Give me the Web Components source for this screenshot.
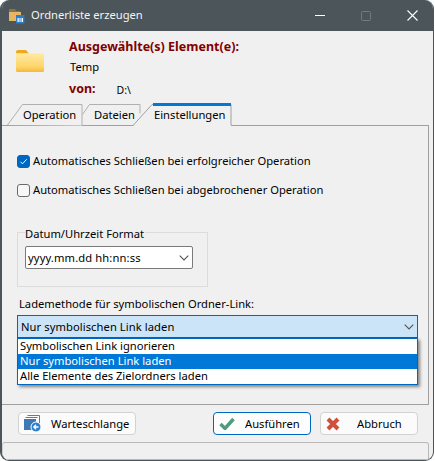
<!DOCTYPE html>
<html lang="de"><head><meta charset="utf-8"><title>Ordnerliste erzeugen</title>
<style>
html,body{margin:0;padding:0;background:#fff}
body{font:11.2px/16px "Noto Sans",sans-serif;color:#000;width:435px;height:461px;overflow:hidden}
</style></head><body>
<dlg-window heading="Ordnerliste erzeugen">
  <info-header></info-header>
  <tab-strip></tab-strip>
  <tab-panel>
    <check-row checked>Automatisches Schließen bei erfolgreicher Operation</check-row>
    <check-row>Automatisches Schließen bei abgebrochener Operation</check-row>
    <group-box label="Datum/Uhrzeit Format"><combo-box value="yyyy.mm.dd hh:nn:ss"></combo-box></group-box>
    <load-method></load-method>
  </tab-panel>
  <action-bar></action-bar>
  <status-bar></status-bar>
</dlg-window>
<script>
const def=(name,css,html,init)=>customElements.define(name,class extends HTMLElement{
  connectedCallback(){ if(this.shadowRoot)return; const r=this.attachShadow({mode:'open'});
    r.innerHTML='<style>'+css+'</style>'+(typeof html==='function'?html(this):html); if(init)init(r,this);}
});
const chevron='<svg width="10" height="6" viewBox="0 0 10 6" fill="none" stroke="#555" stroke-width="1.1"><path d="M.7.7 5 5 9.3.7"/></svg>';

def('dlg-window',`
:host{display:flex;flex-direction:column;box-sizing:border-box;width:434px;height:461px;background:#f0f0f0;border:solid #4c5559;border-width:0 1px 1px 2px;border-radius:9px;overflow:hidden}
.bar{flex:none;display:flex;align-items:center;height:31px;margin-left:-2px;margin-right:-1px;background:#4c5559;color:#f2f4f4;padding-left:9px}
.t{margin-left:6px;flex:1;position:relative;top:-1px}
.b{width:46px;height:31px;display:flex;align-items:center;justify-content:center}
svg{display:block}
`,h=>`<div class="bar">
<svg width="16" height="16" viewBox="0 0 16 16"><path d="M0 1h6l1.500 2H11v2H0z" fill="#8a7345"/><path d="M0 4h12v9H0z" fill="#e8b565"/><path d="M7 7h8.500v8.500H7z" fill="#2b7fc4"/><path d="M8.500 10h5.500v4h-5.500z" fill="#fff"/><path d="M9.500 11h3.500M9.500 13h3.500" stroke="#2b7fc4"/></svg>
<span class="t">${h.getAttribute('heading')}</span>
<div class="b"><svg width="10" height="2" viewBox="0 0 10 2"><path d="M0 .5h10" stroke="#fff"/></svg></div>
<div class="b"><svg width="10" height="10" viewBox="0 0 10 10"><rect x=".5" y=".5" width="9" height="9" rx="1" fill="none" stroke="#727b7e"/></svg></div>
<div class="b" style="margin-right:-1px"><svg width="11" height="11" viewBox="0 0 11 11"><path d="M.5.5l10 10M10.500.5l-10 10" stroke="#fff" stroke-width="1.100"/></svg></div>
</div><slot></slot>`);

def('info-header',`
:host{flex:none;display:flex;height:72px;box-sizing:border-box}
.ic{margin:19px 0 0 14px;width:28px;height:22px}
.c{margin-left:25px;padding-top:8px;display:flex;flex-direction:column}
b{color:#800000;font-weight:700;font-size:12.5px;line-height:16px}
.v{display:flex;height:20px;align-items:center}
.d{margin-left:21px;font-size:10.5px;position:relative;top:1px}
`,`<svg class="ic" viewBox="0 0 28 22"><defs><linearGradient id="f" x1="0" y1="0" x2="0" y2="1"><stop offset="0" stop-color="#ffe9a0"/><stop offset=".7" stop-color="#fdd66c"/><stop offset="1" stop-color="#f4b93a"/></linearGradient></defs><path d="M0 2q0-2 2-2h8l3 3.500H0z" fill="#f0a81c"/><path d="M0 3.500h26.500q1.500 0 1.500 1.500v15.500q0 1.500-1.500 1.500H1.500Q0 22 0 20.500z" fill="url(#f)"/></svg>
<div class="c"><b style="height:20px">Ausgewählte(s) Element(e):</b><span style="height:20px;line-height:16px;margin-left:1px">Temp</span><div class="v"><b>von:</b><span class="d">D:\\</span></div></div>`);

def('tab-strip',`
:host{flex:none;display:flex;height:23px;margin-bottom:-1px;position:relative;z-index:1}
`,`<tab-item label="Operation" w="79" pad="21" shape="M5 21.500 20 1h59.500v21"></tab-item>
<tab-item label="Dateien" w="52" pad="13" shape="M1 11 8 1h50.500v9"></tab-item>
<tab-item active label="Einstellungen" w="99" pad="21"></tab-item>`);

def('tab-item',`
:host{display:block;position:relative;height:23px;box-sizing:border-box}
svg{position:absolute;left:0;top:0;overflow:visible}
span{position:relative;display:block;line-height:16px;padding-top:4px;white-space:nowrap}
`,h=>{
 const w=+h.getAttribute('w'),p=h.getAttribute('pad'),a=h.hasAttribute('active');
 h.style.width=w+'px';
 const s=a?`<path d="M0 22.500 19 1.500H${w-1}V22.500" fill="#f0f0f0" stroke="#a0a0a0"/><path d="M20 1.500H${w-1}" stroke="#0078d4" stroke-width="3"/><path d="M1 23h${w-2}" stroke="#f0f0f0" stroke-width="2"/>`
       :`<path d="${h.getAttribute('shape')}" fill="#f0f0f0" stroke="#b0b0b0" transform="translate(.5 .5)"/>`;
 return `<svg width="${w}" height="23">${s}</svg><span style="padding-left:${p}px">${h.getAttribute('label')}</span>`;});

def('tab-panel',`
:host{flex:none;display:flex;flex-direction:column;box-sizing:border-box;height:280px;margin-right:4px;border-top:1px solid #a0a0a0;border-right:1px solid #a0a0a0;border-bottom:1px solid #a0a0a0;padding:27px 0 0 15px}
`,`<slot></slot>`);

def('check-row',`
:host{display:flex;align-items:center;height:16px;margin-bottom:13px;white-space:nowrap}
.b{width:13px;height:13px;box-sizing:border-box;border-radius:3px;border:1px solid #6b6b6b;background:#f7f7f7;margin-right:3px;flex:none}
:host([checked]) .b{background:#0067c0;border-color:#0067c0}
svg{display:block}
`,h=>`<div class="b">${h.hasAttribute('checked')?'<svg width="11" height="11" viewBox="0 0 11 11"><path d="M2.500 5.800 4.500 7.800 8.700 3.300" fill="none" stroke="#fff"/></svg>':''}</div><slot></slot>`);

def('group-box',`
:host{display:block;box-sizing:border-box;position:relative;width:191px;height:55px;margin-top:21px;border:1px solid #dcdcdc;padding:13px 14px 0 7px}
.lg{position:absolute;left:7px;top:-7px;line-height:15px;background:#f0f0f0;padding-right:1px;white-space:nowrap}
`,h=>`<span class="lg">${h.getAttribute('label')}</span><slot></slot>`);

def('combo-box',`
:host{display:flex;align-items:center;justify-content:space-between;box-sizing:border-box;height:23px;background:#fff;border:1px solid #7a7a7a;border-radius:2px;padding:0 0 0 2px;position:relative;white-space:nowrap;letter-spacing:.12px}
:host([open]){background:#cce4f7;border-color:#0067c0;border-radius:0;padding:0 0 0 3px;letter-spacing:.07px}
svg{display:block;margin-right:3px}
`,h=>`<span>${h.getAttribute('value')}</span>${chevron}<slot></slot>`);

def('load-method',`
:host{display:block;margin-top:9px;width:401px;position:relative}
.l{line-height:16px;margin:0 0 3px 2px;white-space:nowrap}
.list{position:absolute;left:0;right:0;top:42px;background:#fff;border:1px solid #0067c0;box-shadow:2px 2px 3px rgba(0,0,0,.45);z-index:2}
.i{height:15px;line-height:14px;padding-left:2px;white-space:nowrap}
.s{background:#0078d7;color:#fff}
`,`<div class="l">Lademethode für symbolischen Ordner-Link:</div>
<combo-box open value="Nur symbolischen Link laden"></combo-box>
<div class="list"><div class="i">Symbolischen Link ignorieren</div><div class="i s">Nur symbolischen Link laden</div><div class="i">Alle Elemente des Zielordners laden</div></div>`);

def('action-bar',`
:host{flex:none;display:flex;height:37px;box-sizing:border-box;padding:7px 0 0 16px}
.sp{width:77px}
`,`<push-button w="118" label="Warteschlange" ic="q"></push-button><div class="sp"></div>
<push-button w="98" label="Ausführen" ic="ok" focused></push-button><div style="width:9px"></div><push-button w="98" label="Abbruch" ic="x"></push-button>`);

const icons={
 q:'<svg width="17" height="17" viewBox="0 0 17 17"><path d="M3.500.5h12v11M1.500 2.500h12" fill="none" stroke="#6d7a86"/><path d="M0 4h12v11H0z" fill="#3f79b5"/><circle cx="12" cy="12" r="5" fill="#2d7fd0" stroke="#fff"/><path d="M14.500 12h-4M12 9.800 9.800 12l2.200 2.200" fill="none" stroke="#fff" stroke-width="1.300"/></svg>',
 ok:'<svg width="16" height="13" viewBox="0 0 16 13"><path d="M1.500 7 6 11.500 14.500 2" fill="none" stroke="#4f9b7c" stroke-width="3.400"/></svg>',
 x:'<svg width="14" height="14" viewBox="0 0 14 14"><path d="M2 2 12 12M12 2 2 12" fill="none" stroke="#d0503c" stroke-width="4"/></svg>'};
const txtPad={q:10,ok:10,x:17};
def('push-button',`
:host{display:flex;align-items:center;box-sizing:border-box;height:23px;background:#fbfbfb;border:1px solid #d2d2d2;border-radius:4px;white-space:nowrap;padding-left:5px}
:host([focused]){border-color:#0067c0;background:#fdfdfd}
svg{display:block;flex:none}
`,h=>{const k=h.getAttribute('ic');h.style.width=h.getAttribute('w')+'px';
 return icons[k]+`<span style="margin-left:${txtPad[k]}px">${h.getAttribute('label')}</span>`;});

def('status-bar',`
:host{flex:none;display:block;box-sizing:border-box;height:18px;margin-right:4px;border:1px solid #b8b8b8;border-left:1px solid #cfcfcf;border-radius:3px 3px 0 0}
`,``);
</script>
</body></html>
